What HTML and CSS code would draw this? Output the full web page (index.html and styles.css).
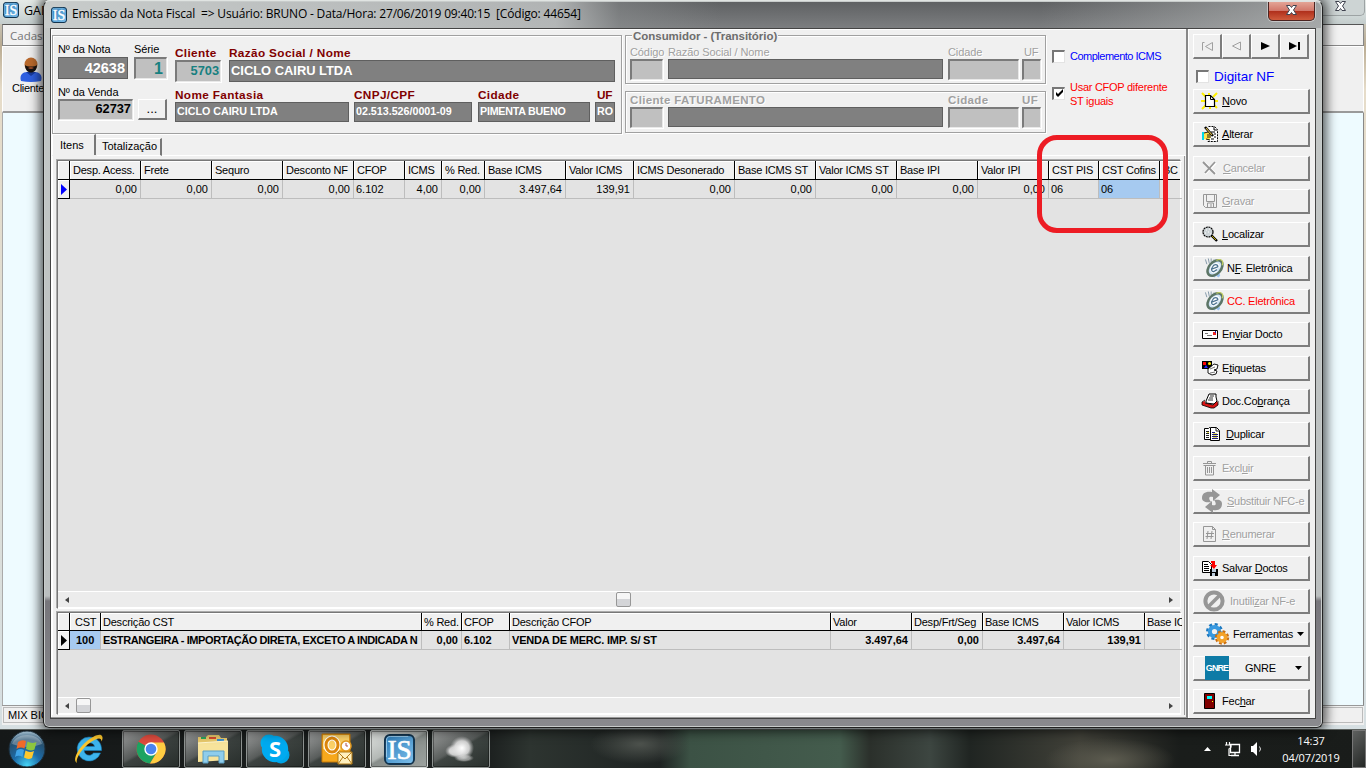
FILE: index.html
```html
<!DOCTYPE html>
<html lang="pt-BR">
<head>
<meta charset="utf-8">
<title>Emissão da Nota Fiscal</title>
<link rel="stylesheet" href="styles.css">
</head>
<body>
<svg class="defs" width="0" height="0">
  <defs>
    <linearGradient id="gBlue" x1="0" y1="0" x2="1" y2="1"><stop offset="0" stop-color="#2b7bb8"/><stop offset="1" stop-color="#7dc0ec"/></linearGradient>
    <radialGradient id="gOrb" cx=".5" cy=".95" r=".95"><stop offset="0" stop-color="#45d3f5"/><stop offset=".4" stop-color="#1c6ba8"/><stop offset=".75" stop-color="#26506f"/><stop offset="1" stop-color="#a9c3d3"/></radialGradient>
    <radialGradient id="gCloud"><stop offset="0" stop-color="#fff"/><stop offset=".6" stop-color="#ddd" stop-opacity=".9"/><stop offset="1" stop-color="#bbb" stop-opacity="0"/></radialGradient>
    <symbol id="is" viewBox="0 0 32 32">
      <rect x="1" y="1" width="30" height="30" rx="5" fill="url(#gBlue)" stroke="#12344f" stroke-width="2"/>
      <path d="M2.500 24V7q0-4.500 4.500-4.500h18" fill="none" stroke="#9fd0ef" stroke-width="1"/>
      <text x="16" y="25.500" text-anchor="middle" textLength="25" lengthAdjust="spacingAndGlyphs" font-family="Liberation Serif, serif" font-size="28" fill="#fff" stroke="#fff" stroke-width=".7">IS</text>
    </symbol>
    <symbol id="nfe" viewBox="0 0 22 20">
      <path d="M6 5l9-2 3 3 1 6-3 3 1 3-2 2-2-2-2 2-5-4-1-6z" fill="#9cc4f2"/>
      <path d="M1.500 1l1.500 5M4.500 0l1 5M7.500 0v4M10.500 1v3" stroke="#8197a8" fill="none"/>
      <ellipse cx="11.500" cy="10" rx="6.200" ry="9.500" transform="rotate(42 11.500 10)" fill="#cfe3f5" stroke="#5c7566" stroke-width="2.600"/>
      <path d="M7.500 11.500l7.500-3c0-3-4-3-6 0-2 3-1 6 1.500 5.500l3-2" fill="none" stroke="#fff" stroke-width="3"/>
      <path d="M8 11.200l6.500-2.500c0-3-4-3-5.500 0-2 3-1 5.500 1.500 5l3-2" fill="none" stroke="#4d7391" stroke-width="1.300"/>
      <path d="M13 2c5-2.500 8 1 6 5" fill="none" stroke="#c3d060" stroke-width="1.200"/>
    </symbol>
    <symbol id="winx" viewBox="0 0 12 12">
      <path d="M1 1.500h3.500l1.500 2 1.500-2h3.500l-3 4.500 3 4.500h-3.500l-1.500-2-1.500 2h-3.500l3-4.500z" fill="#fff" stroke="#40434f" stroke-width="1"/>
    </symbol>
    <symbol id="left" viewBox="0 0 4 6"><path d="M4 0v6L0 3z" fill="#444"/></symbol>
    <symbol id="right" viewBox="0 0 4 6"><path d="M0 0v6l4-3z" fill="#444"/></symbol>
    <symbol id="down" viewBox="0 0 7 4"><path d="M0 0h7L3.500 4z"/></symbol>
  </defs>
</svg>

<div class="desktop">
  <div class="app">
    <div class="app-title"><svg class="app-icon"><use href="#is"/></svg><span>GAD</span><div class="app-close"><svg width="13" height="12"><use href="#winx"/></svg></div></div>
    <div class="app-menu"><span>Cadastro</span></div>
    <div class="app-tools">
      <div class="tool">
        <svg width="22" height="25" viewBox="0 0 22 25"><path d="M1 24c-2-6 2-9 6-9h8c4 0 8 3 6 9q-10 2-20 0z" fill="#2f5fe0"/><path d="M6 15h10l-5 4z" fill="#173a9c"/><ellipse cx="11" cy="7.500" rx="6.500" ry="7" fill="#b9692c"/><path d="M5 8c2 2 10 2 12 0 0 10-12 10-12 0z" fill="#171210"/><path d="M8 11q3-2 6 0-3 2-6 0z" fill="#9a4a28"/></svg>
        <span>Clientes</span>
      </div>
    </div>
    <div class="app-body"></div>
    <div class="app-status"><div>MIX BIO</div></div>
  </div>

  <div class="window">
    <div class="titlebar">
      <svg class="win-icon"><use href="#is"/></svg>
      <span class="win-title">Emissão da Nota Fiscal&nbsp; =&gt; Usuário: BRUNO - Data/Hora: 27/06/2019 09:40:15&nbsp; [Código: 44654]</span>
      <div class="close"><svg width="13" height="12"><use href="#winx"/></svg></div>
    </div>
    <div class="client">
      <div class="main">
        <div class="header">
          <div class="group nota">
            <div class="note-ids">
              <div class="row r-top">
                <div class="f w70"><label>Nº da Nota</label><div class="box dark h22 num13">42638</div></div>
                <div class="f w33"><label>Série</label><div class="box light h22 num16 teal">1</div></div>
              </div>
              <div class="row r-bot">
                <div class="f w75"><label>Nº da Venda</label><div class="box light h21 num12">62737</div></div>
                <button class="dots">...</button>
              </div>
            </div>
            <div class="client-info">
              <div class="row gap8">
                <div class="f w46"><label class="req">Cliente</label><div class="box light h22 num12 teal2">5703</div></div>
                <div class="f w386"><label class="req">Razão Social / Nome</label><div class="box dark h22 big">CICLO CAIRU LTDA</div></div>
              </div>
              <div class="row gap5 second">
                <div class="f w174"><label class="req">Nome Fantasia</label><div class="box dark h20">CICLO CAIRU LTDA</div></div>
                <div class="f w118"><label class="req">CNPJ/CPF</label><div class="box dark h20">02.513.526/0001-09</div></div>
                <div class="f w112"><label class="req">Cidade</label><div class="box dark h20 tight">PIMENTA BUENO</div></div>
                <div class="f w20"><label class="req uf">UF</label><div class="box dark h20">RO</div></div>
              </div>
            </div>
          </div>
          <div class="groups">
            <div class="group consumidor">
              <div class="legend">Consumidor - (Transitório)</div>
              <div class="crow">
                <div class="f w33"><label class="dis">Código</label><div class="box light h21"></div></div>
                <div class="f w275"><label class="dis">Razão Social / Nome</label><div class="box dark h20b"></div></div>
                <div class="f w71"><label class="dis">Cidade</label><div class="box light h21"></div></div>
                <div class="f w19"><label class="dis ufc">UF</label><div class="box light h21"></div></div>
              </div>
            </div>
            <div class="group faturamento">
              <div class="crow">
                <div class="f w33"><label class="dis b">Cliente FATURAMENTO</label><div class="box light h21"></div></div>
                <div class="f w275"><label>&nbsp;</label><div class="box dark h20b"></div></div>
                <div class="f w71"><label class="dis b">Cidade</label><div class="box light h21"></div></div>
                <div class="f w19"><label class="dis b">UF</label><div class="box light h21"></div></div>
              </div>
            </div>
          </div>
          <div class="checks">
            <div class="check blue"><i class="cb"></i><span>Complemento ICMS</span></div>
            <div class="check red"><i class="cb"><svg width="7" height="7" viewBox="0 0 7 7"><path d="M0 2v3l2 2 5-5V-1L2 4z"/></svg></i><span>Usar CFOP diferente<br>ST iguais</span></div>
          </div>
        </div>
        <div class="tabs"><div class="tab on">Itens</div><div class="tab">Totalização</div><div class="tabline"></div></div>
        <div class="page">
          <div class="grid g1">
            <div class="gr cols1 gh"><div></div><div>Desp. Acess.</div><div>Frete</div><div>Sequro</div><div>Desconto NF</div><div>CFOP</div><div>ICMS</div><div>% Red.</div><div>Base ICMS</div><div>Valor ICMS</div><div>ICMS Desonerado</div><div>Base ICMS ST</div><div>Valor ICMS ST</div><div>Base IPI</div><div>Valor IPI</div><div>CST PIS</div><div>CST Cofins</div><div>BC</div></div>
            <div class="gr cols1 gd"><div class="ind"><svg width="6" height="11" viewBox="0 0 6 11"><path d="M0 0v11l6-5.500z" fill="#00f"/></svg></div><div class="n">0,00</div><div class="n">0,00</div><div class="n">0,00</div><div class="n">0,00</div><div>6.102</div><div class="n">4,00</div><div class="n">0,00</div><div class="n">3.497,64</div><div class="n">139,91</div><div class="n">0,00</div><div class="n">0,00</div><div class="n">0,00</div><div class="n">0,00</div><div class="n">0,00</div><div>06</div><div class="sel">06</div><div></div></div>
            <div class="fill"></div>
            <div class="hscroll"><svg width="4" height="6"><use href="#left"/></svg><i class="thumb mid"></i><svg width="4" height="6"><use href="#right"/></svg></div>
          </div>
          <div class="grid g2">
            <div class="gr cols2 gh"><div></div><div class="cst">CST</div><div>Descrição CST</div><div>% Red.</div><div>CFOP</div><div>Descrição CFOP</div><div>Valor</div><div>Desp/Frt/Seg</div><div>Base ICMS</div><div>Valor ICMS</div><div>Base IC</div></div>
            <div class="gr cols2 gd bold"><div class="ind"><svg width="6" height="11" viewBox="0 0 6 11"><path d="M0 0v11l6-5.500z"/></svg></div><div class="sel c">100</div><div>ESTRANGEIRA - IMPORTAÇÃO DIRETA, EXCETO A INDICADA N</div><div class="n">0,00</div><div>6.102</div><div class="venda">VENDA DE MERC. IMP. S/ ST</div><div class="n">3.497,64</div><div class="n">0,00</div><div class="n">3.497,64</div><div class="n">139,91</div><div></div></div>
            <div class="fill"></div>
            <div class="hscroll"><svg width="4" height="6"><use href="#left"/></svg><i class="thumb first"></i><svg width="4" height="6"><use href="#right"/></svg></div>
          </div>
        </div>
      </div>

      <div class="side">
        <div class="nav">
          <button><svg width="13" height="11" viewBox="0 0 13 11"><path d="M1.500 9.500v-8h2M11.500 9.500v-8l-7 4z" fill="none" stroke="#a0a0a0"/></svg></button>
          <button><svg width="11" height="10" viewBox="0 0 11 10"><path d="M9.500 9V1l-8 4z" fill="none" stroke="#a0a0a0"/></svg></button>
          <button><svg width="9" height="8" viewBox="0 0 9 8"><path d="M0 0v8l9-4z"/></svg></button>
          <button><svg width="11" height="8" viewBox="0 0 11 8"><path d="M0 0v8l8-4zM9 0h2v8H9z"/></svg></button>
        </div>
        <div class="check digitar"><i class="cb"></i><span>Digitar NF</span></div>
        <div class="buttons">
          <button><svg width="16" height="16" viewBox="0 0 16 16"><path d="M0 0l4 4M7 0v4M15 0l-4 4M-1 8h5M12 8h4M0 16l5-5M8 12v4M15 15l-4-4" stroke="#fff000" stroke-width="2"/><path d="M3.500 2.500h5l4 4v7h-9z" fill="#fff" stroke="#000" stroke-width="1.200"/><path d="M8.500 2.500v4h4" fill="none" stroke="#000"/></svg><span><u>N</u>ovo</span></button>
          <button><svg width="16" height="16" viewBox="0 0 16 16"><path d="M6.500.5h6l3 3v12h-10z" fill="#fff"/><path d="M6.500.5h6l3 3v12h-10" fill="none" stroke="#000" stroke-dasharray="2 1"/><path d="M12 1v3h3M9 6h4M12 8h2M12 11h2M9 13h3" stroke="#000" fill="none"/><path d="M0 6h2v8H0z" fill="#00d8e8"/><path d="M2 7l4-1 4 2-2 1 1 2-2 3-5-1z" fill="#ffe24a"/><path d="M2 7l4-1M5 9h4M5 11h4M4 13l4 1" stroke="#000" stroke-width=".9"/><path d="M3 1l8 9" stroke="#000" stroke-width="2.600"/><path d="M4 2l6 7" stroke="#e6c34b" stroke-width="1.100"/></svg><span><u>A</u>lterar</span></button>
          <button disabled><svg width="16" height="14" viewBox="0 0 16 14"><path d="M2 1l11 11M13 1L2 12" stroke="#fff" stroke-width="2" transform="translate(1 1)"/><path d="M1 1l12 12M13 1L3 12" stroke="#969696" stroke-width="1.800"/></svg><span class="in1"><u>C</u>ancelar</span></button>
          <button disabled><svg width="16" height="16" viewBox="0 0 16 16"><path d="M1.500 1.500h13v13h-11l-2-2zM4.500 1.500v7h8v-7M5.500 14v-4h6v4M9 11v3" fill="none" stroke="#969696"/></svg><span><u>G</u>ravar</span></button>
          <button><svg width="16" height="16" viewBox="0 0 16 16"><path d="M9 9l6 6" stroke="#000" stroke-width="2.400"/><path d="M10 10l4 4" stroke="#e8d000" stroke-width=".8"/><circle cx="6" cy="6" r="5" fill="#ccd3d6" stroke="#000" stroke-width="1.200" stroke-dasharray="2 .6"/><path d="M4 4h1M7 3h1M6 6h1M3 7h1M8 8h1" stroke="#fff"/></svg><span><u>L</u>ocalizar</span></button>
          <button class="wide"><svg width="21" height="20"><use href="#nfe"/></svg><span>N<u>F</u>. Eletrônica</span></button>
          <button class="wide redtext"><svg width="21" height="20"><use href="#nfe"/></svg><span>CC. Eletrônica</span></button>
          <button><svg width="16" height="16" viewBox="0 0 16 16"><path d="M.5 4.500h15v8H.5z" fill="#fff" stroke="#000"/><path d="M3 7.500h3M5 9.500h5" stroke="#777"/><path d="M11 6h3v3h-3z" fill="#e22"/><path d="M13 5h1v2h-1z" fill="#22a"/></svg><span>En<u>v</u>iar Docto</span></button>
          <button><svg width="16" height="16" viewBox="0 0 16 16"><path d="M0 1h10v8H0z"/><path d="M1 2h3v3H1z" fill="#f00"/><circle cx="7.500" cy="3.500" r="1.500" fill="#fe0"/><path d="M2 8l2-3 2 3z" fill="#22f"/><path d="M6 9l6-5 4 1-1 4-3 1 3 1-1 3-4 1-4-2z" fill="#fff" stroke="#000" stroke-width=".9"/><path d="M8 9l5-2M8 13l5-1" stroke="#555" stroke-width=".8"/></svg><span>E<u>t</u>iquetas</span></button>
          <button><svg width="16" height="16" viewBox="0 0 16 16"><path d="M4 8l3-7h7v3l1 4-3 3-8-1z" fill="#fff" stroke="#000"/><path d="M8 3h4M7 5h4M6 7h5" stroke="#333"/><path d="M0 9l3-1 0 2 8 2 4-4 1 2v2l-4 3H9l-9-3z" fill="#d81414"/><path d="M0 9l3-2M0 9v3l9 3h3l4-3V8M3 10l8 2 4-4" fill="none" stroke="#000" stroke-width=".8"/></svg><span>Doc.Co<u>b</u>rança</span></button>
          <button class="dup"><svg width="18" height="16" viewBox="0 0 18 16"><path d="M1.500 2.500h4l1-1 1 1h2v11h-8z" fill="#fff" stroke="#000"/><path d="M7.500 1.500h6l3 3v10h-9z" fill="#fff" stroke="#000"/><path d="M13 2v3h3M3 5.500h3M3 7.500h3M3 9.500h3M3 11.500h3" stroke="#222" fill="none"/><path d="M9 6.500h3M9 8.500h6M9 10.500h6M9 12.500h6" stroke="#1b1b7c"/><path d="M4 6.500h2M10 7.500h4M10 9.500h4M10 11.500h4" stroke="#e6df60"/></svg><span><u>D</u>uplicar</span></button>
          <button disabled><svg width="16" height="16" viewBox="0 0 16 16"><path d="M1 3.500h13M5.500 3V1.500h4V3M1.500 5.500h12M3.500 6v9h8V6M5.500 7v6M7.500 7v6M9.500 7v6" fill="none" stroke="#969696"/></svg><span>Excl<u>u</u>ir</span></button>
          <button disabled class="sub"><svg width="20" height="24" viewBox="0 0 20 24"><path d="M0 9c0-5 4-7 10-6V0l8 6-7 6V8C7 7 6 9 9 13 3 14 0 12 0 9z" fill="#969696"/><path d="M20 15c0 5-4 7-9 6v3l-8-6 7-6v4c4 1 5-1 2-5 6-1 8 1 8 4z" fill="#969696"/></svg><span><u>S</u>ubstituir NFC-e</span></button>
          <button disabled><svg width="16" height="16" viewBox="0 0 16 16"><path d="M1.500.5h9l3 3v12h-12zM10.500.5v3h3M6 5l-1 8M10 5l-1 8M4 7.500h8M3.500 10.500h8" fill="none" stroke="#969696"/></svg><span><u>R</u>enumerar</span></button>
          <button><svg width="16" height="16" viewBox="0 0 16 16"><path d="M.5 1.500h6l3 3v8h-9z" fill="#fff" stroke="#000"/><path d="M2 4.500h4M2 6.500h5M2 8.500h5M2 10.500h5" stroke="#000"/><path d="M9 1h4v4h2l-3 4-4-4h2V3H9z" fill="#f00"/><path d="M8 9h8v7H8z"/><path d="M10 9h4v3h-4zM10 13h3v3h-3z" fill="#bcd"/></svg><span>Salvar <u>D</u>octos</span></button>
          <button disabled class="inu"><svg width="22" height="22" viewBox="0 0 22 22"><circle cx="11" cy="11" r="8.600" fill="none" stroke="#969696" stroke-width="4"/><path d="M16 6L6 16" stroke="#969696" stroke-width="3.500"/></svg><span>Inutili<u>z</u>ar NF-e</span></button>
          <button class="fer"><svg width="23" height="22" viewBox="0 0 23 22"><circle cx="8.500" cy="8.500" r="7.200" fill="none" stroke="#1d79c0" stroke-width="2.600" stroke-dasharray="3 2.650"/><circle cx="8.500" cy="8.500" r="4.600" fill="none" stroke="#3899e0" stroke-width="4"/><circle cx="16" cy="14.500" r="6" fill="none" stroke="#c96d10" stroke-width="2.400" stroke-dasharray="2.700 2"/><circle cx="16" cy="14.500" r="3.600" fill="#fff" stroke="#f4a229" stroke-width="3.600"/></svg><span>Ferramentas</span><svg class="dd" width="7" height="4"><use href="#down"/></svg></button>
          <button class="gnre"><b>GNRE</b><span>GNRE</span><svg class="dd" width="7" height="4"><use href="#down"/></svg></button>
          <button><svg width="16" height="16" viewBox="0 0 16 16"><path d="M2.500.5h10v15h-10z" fill="#800000" stroke="#000"/><path d="M5 3h5v3H5z" fill="#0ff"/><path d="M10 8h1v1h-1z" fill="#ff0"/></svg><span>Fec<u>h</u>ar</span></button>
        </div>
      </div>
    </div>
  </div>

  <div class="marker"></div>

  <div class="taskbar">
    <div class="start"><svg width="38" height="38" viewBox="0 0 38 38"><circle cx="19" cy="19" r="18" fill="url(#gOrb)" stroke="#1c2c38"/><path d="M4 14C8 2 30 2 34 14q-15 6-30 0z" fill="#fff" opacity=".28"/><path d="M10 12q4-3 8-1l-1.500 7.500q-4-2-8 .5z" fill="#f06a28"/><path d="M19.500 11.500q4 2.500 9 .5l-2 7.500q-4 2-8.500-.5z" fill="#8cc63e"/><path d="M8.500 20.500q4-2.500 7.500-.5l-1.500 7q-4-2.500-7.500 0z" fill="#3fa3e6"/><path d="M17.500 20.500q4 2.500 8.500.5l-2 7q-4 2-8-.5z" fill="#fdc82e"/></svg></div>
    <div class="ie"><svg width="32" height="32" viewBox="0 0 32 32"><path d="M16 4a12 12 0 1 0 11.500 16h-7c-3 4-9 2.500-9.500-2.500h17.500C29 10 24 4 16 4zm-5 9.500c1-5 10-5 10.500 0z" fill="#3db4ec" stroke="#1580bd" stroke-width=".6"/><path d="M4 30c-5-3 1-14 9-21C20 3 27 0 29 3c1 1.500.5 3.500-.5 5.500 0-3-2-4-6-2C12 11 2 25 4 30z" fill="#fbc62d"/></svg></div>
    <div class="tbtn"><svg width="30" height="30" viewBox="0 0 30 30"><circle cx="15" cy="15" r="14.500" fill="#dd4b3e"/><path d="M2.400 7.800A14.500 14.500 0 0 0 14 29.500L21 18z" fill="#1da362"/><path d="M14 29.500A14.500 14.500 0 0 0 28 8.500H15L21 18z" fill="#ffcd42"/><circle cx="15" cy="15" r="6.700" fill="#fff"/><circle cx="15" cy="15" r="5.300" fill="#4a84f0"/></svg></div>
    <div class="tbtn"><svg width="32" height="30" viewBox="0 0 32 30"><path d="M1 6V3h8l2-2h11l2 3h6v22H1z" fill="#e9c96b"/><path d="M4 3h5v2H4z" fill="#2aa55a"/><path d="M12 3h7v2h-7z" fill="#d54a2f"/><path d="M20 5h7v2h-7z" fill="#3b8fd0"/><path d="M1 9l30-2v19l-30 2z" fill="#f7e39b"/><path d="M1 9l30-2" stroke="#fff6cf"/><path d="M6 29V17h21v12h-5v-7H11v7z" fill="#8fcdec" stroke="#5b9fc4"/></svg></div>
    <div class="tbtn"><svg width="30" height="30" viewBox="0 0 30 30"><circle cx="9" cy="9" r="8.500" fill="#00aff0"/><circle cx="21" cy="21" r="8.500" fill="#00a4e6"/><circle cx="15" cy="15" r="13.200" fill="#00aaf0"/><text x="15" y="23" text-anchor="middle" font-family="Open Sans, sans-serif" font-weight="bold" font-size="22" fill="#fff">S</text></svg></div>
    <div class="tbtn"><svg width="32" height="32" viewBox="0 0 32 32"><path d="M1 1h28v28H1z" fill="#f7a81c" stroke="#c77a06"/><path d="M2 2h26v12Q15 20 2 16z" fill="#fbd067"/><ellipse cx="11" cy="12" rx="6" ry="7" fill="none" stroke="#fff" stroke-width="5"/><ellipse cx="11" cy="12" rx="6" ry="7" fill="none" stroke="#dd860c" stroke-width="3"/><circle cx="25" cy="13" r="5" fill="#fff" stroke="#e39a1f" stroke-width="1.500"/><path d="M25 10v3h2" stroke="#a55" fill="none"/><path d="M17 19h14v12H17z" fill="#fff0bd" stroke="#b07814"/><path d="M17 19l7 7 7-7M17 31l5-7M31 31l-5-7" stroke="#b07814" fill="none"/></svg></div>
    <div class="tbtn active"><svg width="31" height="31"><use href="#is"/></svg></div>
    <div class="tbtn"><svg width="34" height="34" viewBox="0 0 34 34"><ellipse cx="12" cy="19" rx="11" ry="7" fill="url(#gCloud)"/><circle cx="18" cy="16" r="12" fill="url(#gCloud)"/><ellipse cx="20" cy="26" rx="10" ry="4" fill="url(#gCloud)" opacity=".6"/></svg></div>
    <div class="tray">
      <svg class="t-up" width="7" height="4" viewBox="0 0 7 4"><path d="M0 4h7L3.500 0z" fill="#fff"/></svg>
      <svg class="t-net" width="15" height="15" viewBox="0 0 15 15"><path d="M5.500 2.500h9v8h-9zM10 11v2M6 13.500h8" fill="none" stroke="#fff" stroke-width="1.300"/><path d="M1.500 0v3M4.500 0v3M0 3h6v2q-1 2-2 2v6.500h4" fill="none" stroke="#fff" stroke-width="1.200"/></svg>
      <svg class="t-vol" width="14" height="14" viewBox="0 0 14 14"><path d="M0 4h2l4-4v14l-4-4H0z" fill="#fff"/><path d="M8.500 4.500q2 2.500 0 5" stroke="#ddd" fill="none"/></svg>
      <div class="clock">14:37<br>04/07/2019</div>
      <div class="peek"></div>
    </div>
  </div>
</div>
</body>
</html>
```
FILE: styles.css
```css
* { box-sizing: border-box; }
body { margin: 0; font-family: "Liberation Sans", Arial, sans-serif; font-size: 11px; color: #000; overflow: hidden; }
.defs { position: absolute; }
svg { display: block; flex: none; overflow: visible; }
button { font: inherit; color: #000; padding: 0; margin: 0; border-radius: 0; }
.desktop { position: relative; width: 1366px; height: 768px; overflow: hidden; background: #d5dad9; }

/* application behind the dialog */
.app { width: 1366px; height: 729px; display: flex; flex-direction: column; padding: 0 2px 4px; background: linear-gradient(180deg, #d9e0de 0, #b9ab92 45px, #e6dcc9 90px, #d6dfe2 100%); }
.app-title { height: 24px; display: flex; align-items: center; gap: 5px; margin: 0 -2px; padding: 0 0 4px 3px; font: 12.5px "Open Sans", sans-serif; background: linear-gradient(180deg, #e5eae7, #d2dad9 60%, #c3cccc); }
.app-icon { width: 16px; height: 16px; }
.app-close { margin: -4px 1px 0 auto; width: 54px; height: 16px; padding: 0 0 0 22px; border: 1px solid #9da3a4; border-top: 0; border-radius: 0 0 5px 5px; background: #cdd4d4; }
.app-menu { height: 22px; border: 1px solid #888; border-top-color: #555; background: #f2f2f2; padding: 4px 7px; color: #777; font: 11.500px "Open Sans", sans-serif; line-height: 13px; }
.app-tools { height: 67px; border: 1px solid #fff; border-bottom: 2px solid #9a9a9a; background: #f0f0f0; padding: 10px 0 0 9px; }
.tool { display: flex; flex-direction: column; width: 44px; letter-spacing: -.3px; }
.tool svg { margin-left: 8px; }
.tool span { line-height: 13px; white-space: nowrap; }
.app-body { flex: 1; background: #eefbff; border-left: 1px solid #aaa; border-right: 1px solid #888; }
.app-status { height: 20px; background: #f0f0f0; border-top: 1px solid #999; padding: 1px; }
.app-status div { height: 16px; border: 1px solid #bbb; line-height: 14px; padding-left: 4px; }

/* dialog */
.window { position: absolute; left: 43px; top: 0; width: 1280px; height: 728px; padding: 1px 7px 8px; display: flex; flex-direction: column; border: 1px solid #222; border-top-color: #e0e4e2; border-radius: 7px 7px 6px 6px; box-shadow: 0 0 12px 3px rgba(0,0,0,.7), inset 0 0 0 1px #c8cccb; background: linear-gradient(180deg, #c4c8c7 0, #bbbfbf 595px, #77767b 600px, #8a8a8e 100%); }
.titlebar { height: 26px; flex: none; margin: 0 -6px; padding: 0 6px 0 6px; display: flex; align-items: center; gap: 5px; border-radius: 6px 6px 0 0; background: linear-gradient(90deg, rgba(205,209,208,.95) 0, rgba(190,193,193,.85) 40%, rgba(140,143,144,.5) 45%, rgba(110,113,115,0) 53%, rgba(120,122,124,0) 78%, rgba(185,188,188,.7) 100%), linear-gradient(180deg, #5f6163, #7c7e80); }
.win-icon { width: 16px; height: 16px; margin-top: -1px; }
.win-title { font: 12px "Open Sans", sans-serif; letter-spacing: -.178px; white-space: nowrap; line-height: 20px; margin-top: -2px; }
.close { margin: -7px 0 0 auto; width: 47px; height: 19px; display: flex; align-items: center; justify-content: center; padding-bottom: 3px; border: 1px solid #4b2320; border-top: 0; border-radius: 0 0 5px 5px; background: linear-gradient(180deg, #e3a496 0, #d2776a 48%, #b0301c 52%, #cf5b3c 100%); box-shadow: 0 0 0 1px rgba(255,255,255,.4); }
.client { flex: 1; min-height: 0; display: flex; margin: 0 -1px; border: 1px solid #444; background: #f0f0f0; box-shadow: inset 1px 1px 0 #fff; }
.main { width: 1137px; display: flex; flex-direction: column; border-right: 2px solid #888; border-bottom: 1px solid #999; }

.header { display: flex; height: 105px; padding: 6px 0 0 1px; }
.group { border: 1px solid #a0a0a0; box-shadow: 1px 1px 0 #fff, inset 1px 1px 0 #fff; }
.nota { width: 570px; height: 99px; display: flex; padding: 7px 0 0 5px; gap: 8px; }
.row { display: flex; align-items: flex-start; }
.note-ids { width: 109px; }
.note-ids .r-top { gap: 6px; }
.note-ids .r-bot { gap: 5px; margin-top: 7px; align-items: flex-end; }
.client-info { padding-top: 4px; }
.gap8 { gap: 8px; }
.gap5 { gap: 5px; }
.gap5 > :nth-child(3) { margin-left: 1px; }
.second { margin-top: 7px; }
.f { flex: none; display: flex; flex-direction: column; }
.f label { height: 13px; line-height: 13px; white-space: nowrap; letter-spacing: -.1px; }
.f label.req { color: #800000; font-weight: bold; letter-spacing: .35px; font-size: 11.800px; }
.f label.uf { padding-left: 2px; letter-spacing: -.2px; }
.w70 { width: 70px; } .w33 { width: 33px; } .w75 { width: 75px; } .w46 { width: 46px; } .w386 { width: 386px; } .w174 { width: 174px; } .w118 { width: 118px; } .w112 { width: 112px; } .w20 { width: 20px; } .w275 { width: 275px; } .w71 { width: 71px; } .w19 { width: 19px; }
.box { font-weight: bold; white-space: nowrap; line-height: 17px; overflow: hidden; }
.dark { background: #808080; border: 1px solid #5f5f5f; color: #fff; padding: 0 0 0 1px; font-size: 10.700px; }
.tight { letter-spacing: -.22px; }
.light { background: #c0c0c0; border: 1px solid #808080; border-width: 2px 1px 1px 2px; border-color: #7a7a7a #e8e8e8 #e8e8e8 #7a7a7a; box-shadow: 1px 1px 0 #fff; text-align: right; padding-right: 2px; }
.h22 { height: 22px; } .h21 { height: 21px; } .h20, .h20b { height: 20px; }
.dark.big { font-size: 12.900px; line-height: 19px; }
.num13.dark { font-size: 14.500px; line-height: 20px; text-align: right; padding-right: 2px; }
.num12 { font-size: 12.800px; line-height: 15px; padding-right: 1px; }
.num16 { font-size: 16px; line-height: 20px; padding-right: 3px; }
.teal { color: #188080; }
.teal2 { color: #188080; line-height: 17px; }
.dots { width: 29px; height: 21px; line-height: 18px; font-size: 13px; border: 1px solid #fff; border-right: 2px solid #777; border-bottom: 2px solid #777; background: #f0f0f0; }

.groups { width: 421px; margin-left: 3px; display: flex; flex-direction: column; gap: 7px; }
.consumidor { height: 49px; position: relative; padding: 10px 0 0 4px; }
.faturamento { height: 42px; padding: 2px 0 0 4px; }
.legend { position: absolute; left: 6px; top: -6px; padding: 0 1px; background: #f0f0f0; color: #6d6d6d; font-weight: bold; line-height: 13px; font-size: 11.500px; letter-spacing: -.03px; }
.crow { display: flex; gap: 5px; }
.crow > :last-child { margin-left: -2px; }
.f label.dis { color: #a0a0a0; text-shadow: 1px 1px 0 #fff; }
.f label.ufc { padding-left: 2px; }
.f label.b { font-weight: bold; font-size: 11.500px; letter-spacing: .35px; }
.nota .note-ids .r-top label + .box { margin-top: 1px; }

.checks { margin-left: 6px; padding-top: 14px; line-height: 14px; }
.check { display: flex; align-items: center; gap: 5px; white-space: nowrap; }
.check.blue { color: #00f; letter-spacing: -.5px; }
.check.red { color: #f00; margin-top: 11px; letter-spacing: -.27px; height: 38px; }
.check.red span { padding-top: 2px; }
.cb { width: 13px; height: 13px; flex: none; background: #fff; border: 1px solid #808080; border-width: 2px 1px 1px 2px; border-color: #777 #e3e3e3 #e3e3e3 #777; display: flex; align-items: center; justify-content: center; }

.tabs { display: flex; height: 22px; align-items: flex-end; }
.tab { height: 18px; line-height: 15px; padding-left: 5px; width: 65px; border-top: 1px solid #fff; border-right: 2px solid #777; border-bottom: 1px solid #fff; margin-left: 1px; letter-spacing: 0; }
.tab.on { width: 44px; height: 21px; margin-left: 1px; padding-left: 7px; border-bottom: 0; border-left: 1px solid #fff; line-height: 20px; align-self: flex-start; }
.tabline { flex: 1; height: 1px; background: #fff; }
.page { flex: 1; min-height: 0; display: flex; flex-direction: column; gap: 3px; margin: 0 1px 2px 1px; padding: 4px 3px 0 4px; border-right: 1px solid #999; border-left: 1px solid #fff; }

.grid { display: flex; flex-direction: column; background: #e3e3e3; border: 1px solid #777; border-right-color: #fff; border-bottom-color: #fff; box-shadow: -1px -1px 0 #aaa; }
.g1 { height: 449px; }
.g2 { height: 103px; }
.gr { display: grid; flex: none; }
.cols1 { grid-template-columns: 12px 71px 71px 71px 71px 51px 37px 43px 81px 68px 101px 81px 81px 81px 71px 50px 61px 22px; }
.cols2 { grid-template-columns: 12px 31px 321px 40px 48px 321px 81px 71px 81px 81px 37px; }
.gr > div { overflow: hidden; white-space: nowrap; }
.gh { height: 19px; border-bottom: 1px solid #000; background: #f0f0f0; }
.g2 .gh { height: 18px; }
.gh > div { border-right: 1px solid #000; padding-left: 3px; line-height: 19px; letter-spacing: -.22px; box-shadow: inset 1px 1px 0 #fff; }
.g2 .gh > div { padding-left: 2px; line-height: 18px; }
.g2 .gh > .cst { padding-left: 5px; }
.gd > div { height: 19px; border-right: 1px solid #bdbdbd; border-bottom: 1px solid #bdbdbd; padding: 0 3px 0 2px; line-height: 19px; }
.gh > div:last-child, .gd > div:last-child { border-right: 0; }
.gh > div:last-child { padding-right: 0; }
.gd > .n { text-align: right; padding-right: 3px; }
.gd > .ind { background: #f0f0f0; border-color: #000; display: flex; align-items: center; padding-left: 3px; box-shadow: inset 1px 1px 0 #fff; }
.gd > .sel { background: #a6caf0; }
.gd > .c { padding-left: 6px; }
.bold { font-weight: bold; }
.cols2.bold > :nth-child(3) { letter-spacing: -.41px; padding-right: 0; }
.cols2.bold > .venda { letter-spacing: -.2px; }
.fill { flex: 1; }
.hscroll { height: 17px; display: flex; align-items: center; padding: 0 7px; background: #ececec; border-top: 1px solid #fff; border-bottom: 1px solid #fff; }
.thumb { flex: none; width: 15px; height: 15px; border: 1px solid #979797; border-radius: 2px; background: linear-gradient(180deg, #f6f6f6 45%, #d4d5d8 50%); margin-right: auto; }
.thumb.mid { margin-left: 547px; }
.thumb.first { margin-left: 7px; }

.side { flex: 1; padding: 5px 0 0 4px; border-left: 1px solid #fff; }
.nav { display: flex; }
.nav button { width: 29px; height: 25px; display: flex; align-items: center; justify-content: center; }
.nav button, .buttons button { border: 1px solid #fff; border-right: 2px solid #7d7d7d; border-bottom: 2px solid #7d7d7d; background: #f0f0f0; }
.check.digitar { height: 26px; margin: 4px 0 0 3px; color: #00f; font-size: 13.500px; letter-spacing: -.05px; }
.buttons { display: flex; flex-direction: column; gap: 8.330px; width: 117px; }
.buttons button { height: 25px; flex: none; display: flex; align-items: center; gap: 4px; padding-left: 8px; white-space: nowrap; letter-spacing: -.22px; text-align: left; }
.buttons button:disabled { color: #a0a0a0; text-shadow: 1px 1px 0 #fff; }
.buttons .in1 { margin-left: 1px; }
.buttons .wide { padding-left: 10px; gap: 2px; }
.buttons .redtext { color: #f00; }
.buttons .dup { padding-left: 9px; gap: 5px; }
.buttons .sub { padding-left: 8px; gap: 5px; letter-spacing: -.25px; }
.buttons .inu { padding-left: 9px; gap: 5px; }
.buttons .fer { padding-left: 12px; gap: 4px; }
.dd { margin: 0 6px 0 auto; }
.gnre b { width: 24px; height: 24px; margin: -1px 12px -1px 3px; background: #0e7ba6; color: #fff; font: bold 9px/24px "Liberation Sans", sans-serif; letter-spacing: -.9px; overflow: hidden; text-align: center; }
.buttons .gnre span { letter-spacing: -.2px; }

.marker { position: absolute; left: 1037px; top: 135px; width: 131px; height: 98px; border: 5px solid #ed1c24; border-radius: 20px; }

/* taskbar */
.taskbar { height: 39px; display: flex; align-items: center; gap: 4px; border-top: 1px solid #5d625f; color: #fff; background:
  radial-gradient(ellipse 50px 20px at 640px 14px, #4d524d, transparent),
  radial-gradient(ellipse 65px 22px at 1110px 30px, #5d5c50, transparent),
  linear-gradient(90deg, #151818 0, #1d2120 490px, #2d3430 530px, #1e2322 660px, #3c5245 690px, #445c4d 840px, #2b302b 870px, #3d4641 930px, #202522 970px, #414139 1080px, #1a1d1b 1180px, #191c1a 1366px); }
.start { width: 54px; padding-left: 8px; }
.ie { width: 60px; padding-left: 15px; }
.tbtn { width: 58px; height: 38px; display: flex; align-items: center; justify-content: center; border: 1px solid #8e9391; border-radius: 2px; box-shadow: inset 0 0 0 1px rgba(0,0,0,.35); background: linear-gradient(150deg, rgba(255,255,255,.58), rgba(190,195,192,.38) 45%, rgba(90,98,94,.55) 50%, rgba(50,58,54,.6)); }
.active { background: linear-gradient(150deg, #e2e5e3, #b3b8b5 45%, #888e8b 50%, #9da3a0); border-color: #d8dcda; }
.tray { flex: 1; display: flex; align-items: center; justify-content: flex-end; height: 38px; }
.t-net { margin-left: 14px; }
.t-vol { margin-left: 11px; }
.clock { width: 60px; margin: 0 11px 0 16px; text-align: center; font: 11px/17px "Open Sans", sans-serif; letter-spacing: -.1px; white-space: nowrap; }
.peek { width: 14px; height: 38px; border: 1px solid #777; background: linear-gradient(135deg, rgba(255,255,255,.3), rgba(255,255,255,.05)); }
```
